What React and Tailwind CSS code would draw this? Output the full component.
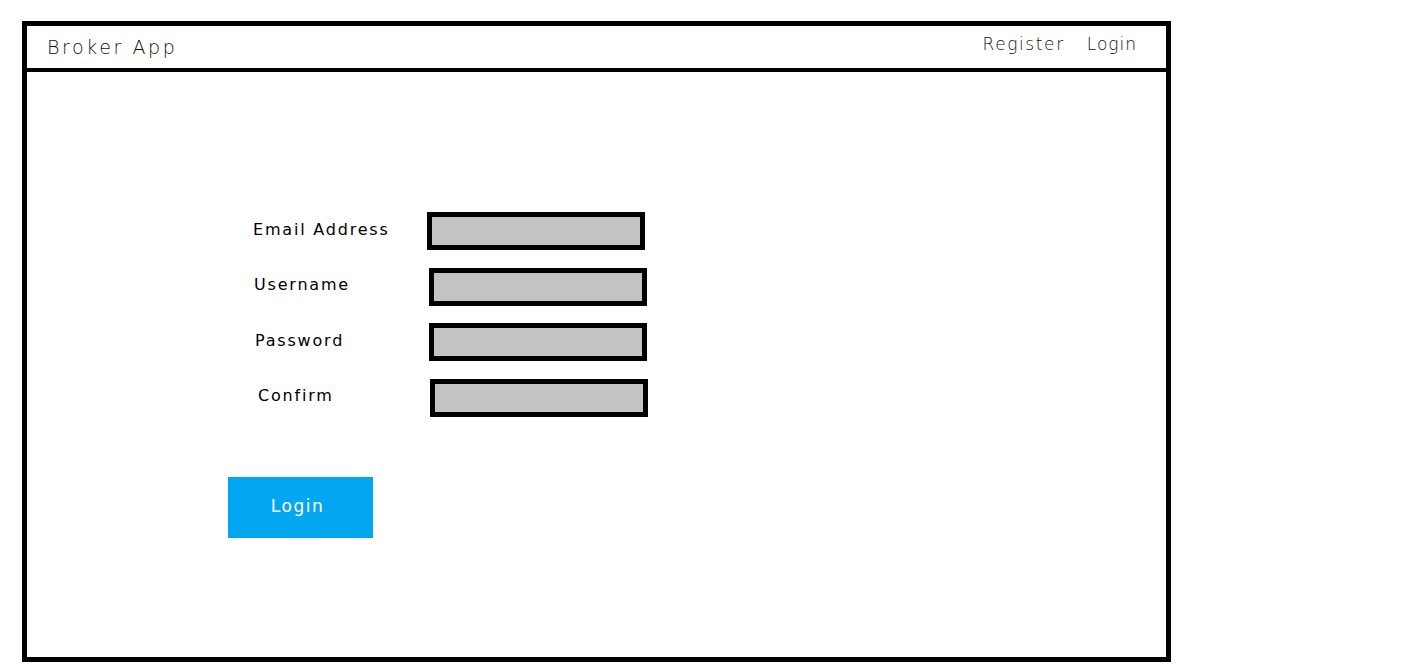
const fields = [
  { label: 'Email Address', labelShift: 'pl-0', boxShift: 'ml-0' },
  { label: 'Username', labelShift: 'pl-[1px]', boxShift: 'ml-[2px]' },
  { label: 'Password', labelShift: 'pl-[2px]', boxShift: 'ml-[2px]' },
  { label: 'Confirm', labelShift: 'pl-[5px]', boxShift: 'ml-[3px]' },
];

const Field = ({ label, labelShift, boxShift }) => (
  <div className="flex items-center h-[38px]">
    <label
      className={`w-[174px] shrink-0 ${labelShift} text-[16px] tracking-[1.8px] text-black -mt-[3px]`}
    >
      {label}
    </label>
    <div className={`w-[218px] h-[38px] ${boxShift} border-[5px] border-black bg-[#c3c3c3]`} />
  </div>
);

const App = () => {
  return (
    <div className="w-[1416px] h-[672px] bg-white pt-[21px] pl-[22px] font-['DejaVu_Sans',sans-serif]">
      <div className="w-[1149px] h-[641px] border-[5px] border-black flex flex-col">
        {/* Top bar */}
        <header className="h-[46px] flex items-center justify-between border-b-[4px] border-black pl-[20px] pr-[29px]">
          <span className="text-[19px] font-extralight tracking-[2.6px] text-[#111]">
            Broker App
          </span>
          <nav className="flex gap-[22px] text-[17px] font-extralight text-[#111] -mt-[5px]">
            <a className="tracking-[1.6px]">Register</a>
            <a className="tracking-[1px]">Login</a>
          </nav>
        </header>

        {/* Register form */}
        <main className="pt-[140px] pl-[201px]">
          <div className="flex flex-col gap-[17.5px] pl-[25px]">
            {fields.map((f) => (
              <Field key={f.label} {...f} />
            ))}
          </div>
          <button className="mt-[60px] w-[145px] h-[61px] pr-[6px] bg-[#03a6f0] text-white text-[17px] tracking-[1.5px]">
            Login
          </button>
        </main>
      </div>
    </div>
  );
};

export default App;
